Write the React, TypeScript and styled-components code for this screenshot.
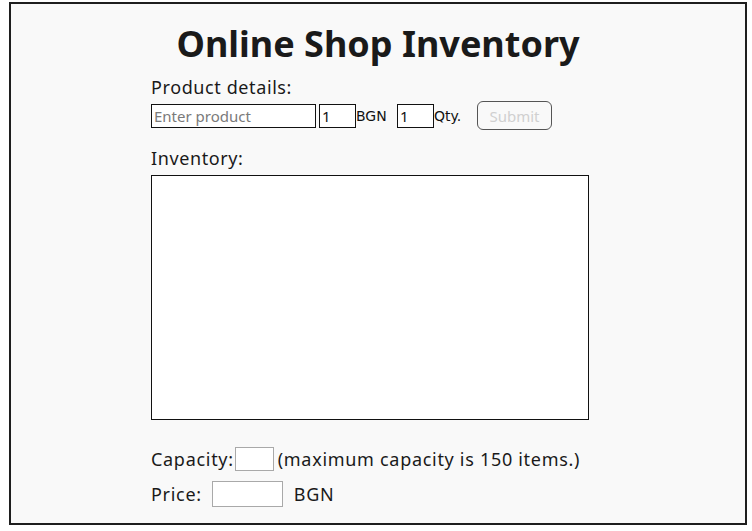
import React from "react";
import styled, { createGlobalStyle } from "styled-components";

const Global = createGlobalStyle`
  html, body { margin: 0; padding: 0; background: #ffffff; }
  body { font-family: "Noto Sans", "Open Sans", sans-serif; color: #1a1a1a; }
  * { box-sizing: border-box; }
`;

const Frame = styled.div`
  margin: 2px 0 0 9px;
  width: 738px;
  height: 523px;
  border: 2px solid #1e1e1e;
  background: #f9f9f9;
  display: flex;
  flex-direction: column;
`;

const Title = styled.h1`
  margin: 20px 0 0 0;
  font-size: 36px;
  line-height: 40px;
  font-weight: 700;
  text-align: center;
  color: #1a1a1a;
`;

const Form = styled.div`
  padding-left: 140px;
  display: flex;
  flex-direction: column;
`;

const Label = styled.div<{ $top: number }>`
  margin-top: ${(p) => p.$top}px;
  font-size: 18px;
  line-height: 22px;
  letter-spacing: 0.6px;
  color: #1a1a1a;
`;

const InputRow = styled.div`
  display: flex;
  align-items: center;
  height: 29px;
  margin-top: 3px;
`;

const TextInput = styled.input<{ $w: number; $ml?: number }>`
  width: ${(p) => p.$w}px;
  height: 24px;
  margin-left: ${(p) => p.$ml ?? 0}px;
  border: 1px solid #111;
  background: #fff;
  padding: 0 2px;
  font-family: "Noto Sans", "Open Sans", sans-serif;
  font-size: 15px;
  color: #111;
  outline: none;
  &::placeholder { color: #7a7a7a; }
`;

const Unit = styled.span<{ $w: number }>`
  width: ${(p) => p.$w}px;
  font-family: "DejaVu Sans", sans-serif;
  font-size: 14px;
  color: #111;
`;

const SubmitButton = styled.button`
  margin-left: 15px;
  width: 75px;
  height: 29px;
  border: 1px solid #555;
  border-radius: 6px;
  background: #f9f9f9;
  color: #d0d0d0;
  font-family: "Noto Sans", "Open Sans", sans-serif;
  font-size: 15px;
  padding: 0;
`;

const Inventory = styled.textarea`
  margin-top: 6px;
  width: 438px;
  height: 245px;
  border: 1px solid #111;
  background: #fff;
  resize: none;
  outline: none;
  display: block;
`;

const FieldRow = styled.div<{ $top: number }>`
  display: flex;
  align-items: center;
  margin-top: ${(p) => p.$top}px;
  font-size: 18px;
  line-height: 24px;
  letter-spacing: 0.7px;
  color: #1a1a1a;
`;

const SmallInput = styled.input<{ $w: number; $h: number; $ml: number; $mr: number }>`
  width: ${(p) => p.$w}px;
  height: ${(p) => p.$h}px;
  margin-left: ${(p) => p.$ml}px;
  margin-right: ${(p) => p.$mr}px;
  border: 1px solid #a9a9a9;
  background: #fff;
  outline: none;
`;

export default function App() {
  return (
    <>
      <Global />
      <Frame>
        <Title>Online Shop Inventory</Title>
        <Form>
          <Label $top={12}>Product details:</Label>
          <InputRow>
            <TextInput $w={165} placeholder="Enter product" />
            <TextInput $w={37} $ml={3} defaultValue="1" />
            <Unit $w={41}>BGN</Unit>
            <TextInput $w={37} defaultValue="1" />
            <Unit $w={28}>Qty.</Unit>
            <SubmitButton disabled>Submit</SubmitButton>
          </InputRow>
          <Label $top={17}>Inventory:</Label>
          <Inventory />
          <FieldRow $top={27}>
            <span>Capacity:</span>
            <SmallInput $w={39} $h={24} $ml={1} $mr={4} />
            <span>(maximum capacity is 150 items.)</span>
          </FieldRow>
          <FieldRow $top={10}>
            <span>Price:</span>
            <SmallInput $w={71} $h={26} $ml={10} $mr={11} />
            <span>BGN</span>
          </FieldRow>
        </Form>
      </Frame>
    </>
  );
}
